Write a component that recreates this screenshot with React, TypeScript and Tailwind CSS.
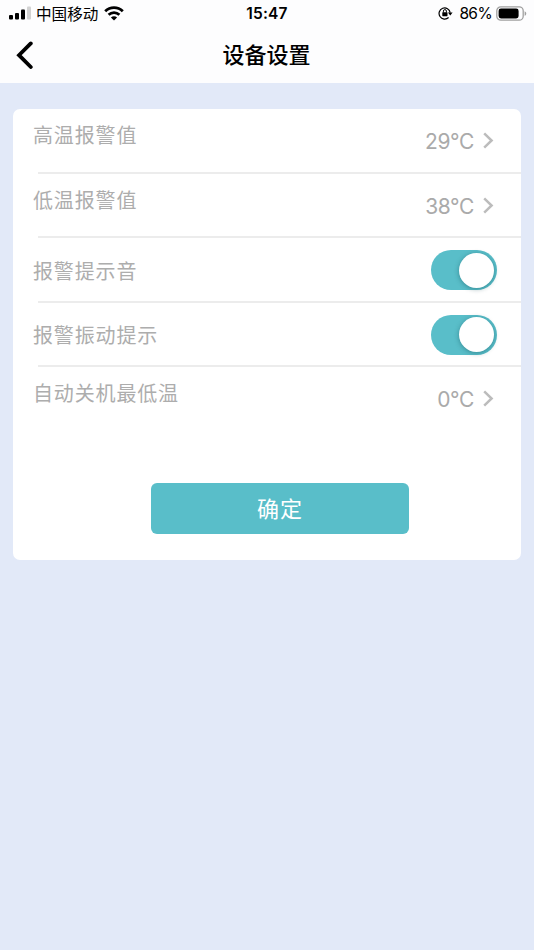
import type { ReactNode } from "react";

function Chevron() {
  return (
    <svg width="11" height="17" viewBox="0 0 11 17" fill="none" className="-mt-px ml-[9px]">
      <path d="M1.2 1.3 L8.6 8.5 L1.2 15.7" stroke="#bcbcbc" strokeWidth="2.5" />
    </svg>
  );
}

function Value({ children }: { children: ReactNode }) {
  return (
    <div className="flex items-center pr-[27px] text-[21px] leading-[30px] tracking-[-0.4px] text-[#aaaaaa]">
      <span className="-mb-[2px]">{children}</span>
      <Chevron />
    </div>
  );
}

function Toggle() {
  return (
    <div className="mr-[24px] flex h-[40px] w-[66px] items-center justify-end rounded-full bg-[#59bec9] pr-[3px]">
      <div className="h-[35px] w-[35px] rounded-full bg-white shadow-[0_1px_5px_rgba(0,60,70,0.4)]" />
    </div>
  );
}

function Row({ label, raised, last, children }: { label: string; raised?: boolean; last?: boolean; children: ReactNode }) {
  return (
    <div className="h-[64.5px]">
      <div className="flex h-[63px] items-center justify-between pl-[20px] pt-[2px]">
        <span className={`text-[20px] leading-[30px] tracking-[0.85px] text-[#adadad] ${raised ? "mb-[10px]" : "mt-[3px]"}`}>{label}</span>
        {children}
      </div>
      {!last && <div className="ml-[25px] h-[2px] bg-[#ececec]" />}
    </div>
  );
}

export default function App() {
  return (
    <div className="h-[950px] w-[534px] overflow-hidden bg-[#e2e9f8] font-['Inter','Noto_Sans_CJK_SC',sans-serif]">
      <header className="h-[83px] bg-[#fdfdfe] text-black">
        <div className="grid h-[27px] grid-cols-3 items-center">
          <div className="flex items-center pl-[9px]">
            <svg width="22" height="14" viewBox="0 0 22 14" className="-mt-px">
              <rect x="0" y="9" width="4" height="4.5" rx="1" />
              <rect x="6" y="7" width="4" height="6.5" rx="1" />
              <rect x="12" y="3.5" width="4" height="10" rx="1" />
              <rect x="18" y="0.5" width="4" height="13" rx="1" fill="#d2d2d2" />
            </svg>
            <span className="ml-[5px] mt-[2px] text-[15.6px] leading-[24px]">中国移动</span>
            <svg width="20" height="15" viewBox="0 0 20 15" className="-mt-px ml-[6px]" fill="none" stroke="#000" strokeWidth="2.8">
              <path d="M1.2 5.2 C6.2 0.4 13.8 0.4 18.8 5.2" />
              <path d="M4.6 8.7 C7.7 5.8 12.3 5.8 15.4 8.7" />
              <path d="M10 14.5 L6.9 11.4 C8.7 9.8 11.3 9.8 13.1 11.4 Z" fill="#000" stroke="none" />
            </svg>
          </div>
          <span className="mt-px text-center text-[15.5px] font-semibold leading-[24px] tracking-[0.2px]">15:47</span>
          <div className="flex items-center justify-end pr-[7px]">
            <svg width="15" height="14" viewBox="0 0 15 14" fill="none" stroke="#000" strokeWidth="1.2" className="-mt-px">
              <path d="M10.6 11.5 A5.6 5.6 0 1 1 12.2 6.6" />
              <path d="M9.9 6.5 H14.6 L12.3 9.6 Z" fill="#000" stroke="none" />
              <rect x="4.3" y="6.2" width="5.2" height="4" rx="0.6" fill="#000" stroke="none" />
              <path d="M5.4 6.5 V5.1 A1.5 1.5 0 0 1 8.4 5.1 V6.5" strokeWidth="1" />
            </svg>
            <span className="ml-[6px] mt-px text-[15.5px] leading-[24px] tracking-[-0.6px]">86%</span>
            <svg width="31" height="15" viewBox="0 0 31 15" className="-mt-px ml-[4px]">
              <rect x="0.8" y="0.8" width="26.4" height="13.4" rx="4" fill="none" stroke="#a0a0a0" strokeWidth="1.3" />
              <rect x="2.6" y="2.6" width="20" height="9.8" rx="2.4" />
              <path d="M28.6 5.2 C30.8 6 30.8 9 28.6 9.8 Z" fill="#a0a0a0" />
            </svg>
          </div>
        </div>
        <div className="grid h-[56px] grid-cols-[60px_1fr_60px] items-center">
          <svg width="18" height="28" viewBox="0 0 18 28" fill="none" className="-mt-px ml-[16px]">
            <path d="M14.8 2.4 L3 14.2 L14.8 26" stroke="#000" strokeWidth="3.8" strokeLinecap="round" />
          </svg>
          <h1 className="pr-px text-center text-[22px] font-medium leading-[32px]">设备设置</h1>
        </div>
      </header>
      <main className="mx-[13px] mt-[25.5px] h-[451.5px] rounded-[7px] bg-white">
        <Row label="高温报警值" raised><Value>29°C</Value></Row>
        <Row label="低温报警值" raised><Value>38°C</Value></Row>
        <Row label="报警提示音"><Toggle /></Row>
        <Row label="报警振动提示"><Toggle /></Row>
        <Row label="自动关机最低温" raised last><Value>0°C</Value></Row>
        <button className="ml-[138px] mt-[52px] block h-[51px] w-[258px] rounded-[6px] bg-[#59bec9] text-[22px] leading-[32px] tracking-[1px] text-white">确定</button>
      </main>
    </div>
  );
}
